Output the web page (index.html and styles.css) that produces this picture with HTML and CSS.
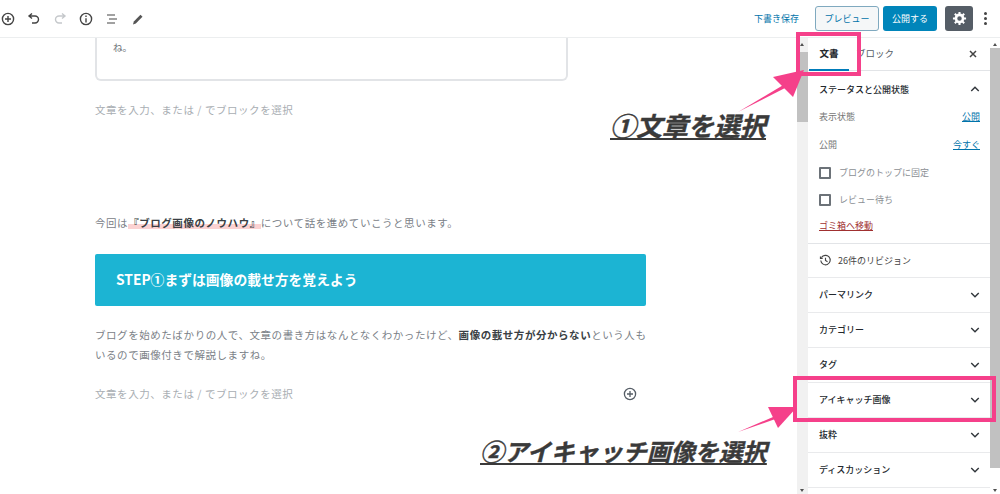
FILE: index.html
```html
<!DOCTYPE html>
<html lang="ja">
<head>
    <meta charset="UTF-8">
    <title>投稿を編集</title>
    <link rel="stylesheet" href="styles.css">
</head>
<body>
    <header class="topbar">
        <div class="tools">
            <svg class="tool" viewBox="0 0 16 16"><circle cx="8" cy="8" r="5.6"/><path d="M8 5v6M5 8h6"/></svg>
            <svg class="tool" viewBox="0 0 16 16"><path d="M6 2.5 3 5l3 2.5M3.5 5H9a3.5 3.5 0 0 1 0 7H6"/></svg>
            <svg class="tool off" viewBox="0 0 16 16"><path d="M10 2.5 13 5l-3 2.5M12.5 5H7a3.5 3.5 0 0 0 0 7h3"/></svg>
            <svg class="tool" viewBox="0 0 16 16"><circle cx="8" cy="8" r="5.6"/><path d="M8 7.2V11.500M8 4.600v1.400"/></svg>
            <svg class="tool thin" viewBox="0 0 16 16"><path d="M3 4h8M5 8h8M3 12h8"/></svg>
            <svg class="tool" viewBox="0 0 16 16"><path class="solid" d="M3 13.500l.8-3L10.500 3.800l2 2L5.800 12.500z"/></svg>
        </div>
        <div class="actions">
            <span class="save">下書き保存</span>
            <span class="btn-preview">プレビュー</span>
            <span class="btn-publish">公開する</span>
            <span class="btn-gear">
                <svg viewBox="0 0 16 16" width="15" height="15"><circle cx="8" cy="8" r="3.800" fill="none" stroke="#fff" stroke-width="2.800"/><path d="M8 1v3M8 12v3M1 8h3M12 8h3M3 3l2.200 2.200M10.800 10.800 13 13M13 3l-2.200 2.200M5.200 10.800 3 13" stroke="#fff" stroke-width="2.200"/></svg>
            </span>
            <span class="more"><i></i><i></i><i></i></span>
        </div>
    </header>

    <div class="workspace">
        <main class="editor">
            <div class="column">
                <div class="card"><p>ね。</p></div>
                <p class="placeholder first">文章を入力、または / でブロックを選択</p>
                <p class="para intro">今回は<mark><strong>『ブログ画像のノウハウ』</strong></mark>について話を進めていこうと思います。</p>
                <h2 class="step">STEP①まずは画像の載せ方を覚えよう</h2>
                <p class="para body">ブログを始めたばかりの人で、文章の書き方はなんとなくわかったけど、<strong>画像の載せ方が分からない</strong>という人もいるので画像付きで解説しますね。</p>
                <div class="add-row">
                    <p class="placeholder">文章を入力、または / でブロックを選択</p>
                    <svg class="add" viewBox="0 0 16 16"><circle cx="8" cy="8" r="5.600"/><path d="M8 5v6M5 8h6"/></svg>
                </div>
            </div>
        </main>

        <div class="track"><span class="thumb-left"></span></div>

        <aside class="sidebar">
            <div class="tabs">
                <span class="tab active">文書</span>
                <span class="tab">ブロック</span>
                <svg class="close" viewBox="0 0 8 8"><path d="M1 1l6 6M7 1 1 7"/></svg>
            </div>
            <section class="status">
                <div class="panel-head"><b>ステータスと公開状態</b><svg class="chev" viewBox="0 0 12 8"><path d="M1.500 6.500 6 2l4.500 4.500"/></svg></div>
                <div class="meta"><span>表示状態</span><a>公開</a></div>
                <div class="meta"><span>公開</span><a>今すぐ</a></div>
                <label class="check"><i></i>ブログのトップに固定</label>
                <label class="check"><i></i>レビュー待ち</label>
                <a class="trash">ゴミ箱へ移動</a>
            </section>
            <div class="revisions">
                <svg viewBox="0 0 16 16" width="13" height="13"><path d="M3 4.500A5.800 5.800 0 1 1 2.200 8M1.800 3v2.500h2.700M8 4.500V8l2.500 1.500"/></svg>
                <span>26件のリビジョン</span>
            </div>
            <div class="panel-row"><b>パーマリンク</b><svg class="chev" viewBox="0 0 12 8"><path d="M1.500 1.500 6 6l4.500-4.500"/></svg></div>
            <div class="panel-row"><b>カテゴリー</b><svg class="chev" viewBox="0 0 12 8"><path d="M1.500 1.500 6 6l4.500-4.500"/></svg></div>
            <div class="panel-row"><b>タグ</b><svg class="chev" viewBox="0 0 12 8"><path d="M1.500 1.500 6 6l4.500-4.500"/></svg></div>
            <div class="panel-row"><b>アイキャッチ画像</b><svg class="chev" viewBox="0 0 12 8"><path d="M1.500 1.500 6 6l4.500-4.500"/></svg></div>
            <div class="panel-row"><b>抜粋</b><svg class="chev" viewBox="0 0 12 8"><path d="M1.500 1.500 6 6l4.500-4.500"/></svg></div>
            <div class="panel-row"><b>ディスカッション</b><svg class="chev" viewBox="0 0 12 8"><path d="M1.500 1.500 6 6l4.500-4.500"/></svg></div>
        </aside>

        <div class="track right"><span class="thumb-right"></span></div>
    </div>

    <!-- annotations drawn over the screenshot -->
    <div class="box box-tab"></div>
    <div class="box box-eyecatch"></div>
    <svg class="arrows" width="1000" height="494" viewBox="0 0 1000 494">
        <path d="M738 112 785 84 787 87z" fill="#f5408a"/>
        <path d="M804 70 773 77 793 97z" fill="#f5408a"/>
        <path d="M738 432 780 414 781 417z" fill="#f5408a"/>
        <path d="M797 407 768 407 778 428z" fill="#f5408a"/>
    </svg>
    <span class="note note-one">①文章を選択</span>
    <span class="note note-two">②アイキャッチ画像を選択</span>
</body>
</html>
```

FILE: styles.css
```css
* {
    box-sizing: border-box;
}
html, body {
    margin: 0;
    height: 494px;
    overflow: hidden;
}
body {
    position: relative;
    background: #fff;
    color: #555d66;
    font-family: "Noto Sans CJK JP", "Noto Sans", sans-serif;
    font-size: 10px;
}
p, h2 {
    margin: 0;
}
.topbar {
    height: 38px;
    display: flex;
    justify-content: space-between;
    align-items: center;
    border-bottom: 1px solid #eceeef;
}
.tools {
    display: flex;
    gap: 10px;
}
.tool {
    width: 16px;
    height: 16px;
    fill: none;
    stroke: #444;
    stroke-width: 1.4;
}
.tool.off {
    stroke: #c5c8cb;
}
.tool.thin {
    stroke-width: 1.1;
}
.tool .solid {
    fill: #555;
    stroke: none;
}
.actions {
    display: flex;
    align-items: center;
    padding-right: 13px;
}
.save {
    color: #0073aa;
    font-size: 9px;
    margin-right: 16px;
}
.btn-preview {
    width: 64px;
    height: 25px;
    border: 1px solid #7fa9bf;
    border-radius: 3px;
    background: #f5f7f8;
    color: #0073aa;
    font-size: 9px;
    line-height: 23px;
    text-align: center;
    margin-right: 4px;
}
.btn-publish {
    width: 54px;
    height: 25px;
    border-radius: 3px;
    background: #0085ba;
    color: #fff;
    font-size: 9px;
    line-height: 25px;
    text-align: center;
    margin-right: 8px;
}
.btn-gear {
    width: 28px;
    height: 25px;
    border-radius: 3px;
    background: #555d66;
    display: flex;
    align-items: center;
    justify-content: center;
    margin-right: 11px;
}
.more {
    display: flex;
    flex-direction: column;
    gap: 2px;
}
.more i {
    width: 3px;
    height: 3px;
    border-radius: 50%;
    background: #444;
}
.workspace {
    display: flex;
    height: 456px;
}
.editor {
    width: 797px;
    overflow: hidden;
}
.column {
    width: 551px;
    margin-left: 95px;
}
.card {
    width: 473px;
    height: 43px;
    border: 2px solid #e2e4e7;
    border-top: none;
    border-radius: 0 0 6px 6px;
    padding: 0 0 0 16px;
    color: #6c7278;
    font-size: 9.500px;
    line-height: 18px;
}
.placeholder {
    color: #a9aeb3;
    font-size: 10.500px;
    letter-spacing: .55px;
    line-height: 18px;
}
.placeholder.first {
    margin-top: 20px;
}
.para {
    color: #7b8187;
    font-size: 10.500px;
    letter-spacing: .55px;
    line-height: 20px;
}
.para strong {
    color: #3a3f44;
}
.intro {
    margin-top: 94px;
}
.intro mark {
    color: #7b8187;
    background: linear-gradient(transparent 60%, #fbd2d2 60%, #fbd2d2 92%, transparent 92%);
}
.step {
    margin-top: 21px;
    height: 52px;
    padding-left: 21px;
    background: #1cb4d3;
    border-radius: 2px;
    color: #fff;
    font-size: 13.800px;
    font-weight: 700;
    line-height: 51px;
}
.body {
    margin-top: 19px;
    margin-right: -4px;
}
.add-row {
    display: flex;
    justify-content: space-between;
    align-items: center;
    margin-top: 20px;
    padding-right: 8px;
}
.add {
    width: 16px;
    height: 16px;
    fill: none;
    stroke: #555d66;
    stroke-width: 1.300;
}
.track {
    width: 11px;
    background: #f1f1f1;
    position: relative;
}
.track::before, .track::after {
    content: '';
    position: absolute;
    left: 3px;
    border-left: 2.500px solid transparent;
    border-right: 2.500px solid transparent;
}
.track::before {
    top: 5px;
    border-bottom: 3px solid #505050;
}
.track::after {
    bottom: 2px;
    border-top: 3px solid #505050;
}
.track.right {
    width: 10px;
    background: #fff;
}
.thumb-left {
    display: block;
    width: 11px;
    height: 70px;
    margin-top: 14px;
    background: #c1c1c1;
}
.thumb-right {
    display: block;
    width: 10px;
    height: 420px;
    margin-top: 10px;
    background: #c1c1c1;
}
.sidebar {
    width: 182px;
    background: #fff;
}
.tabs {
    display: flex;
    align-items: center;
    height: 33px;
    border-bottom: 1px solid #e2e4e7;
}
.tab {
    width: 40px;
    height: 33px;
    margin-left: 1px;
    text-align: center;
    line-height: 31px;
    color: #555d66;
    font-size: 9.500px;
}
.tab + .tab {
    width: 50px;
}
.tab.active {
    color: #23282d;
    font-weight: 700;
    border-bottom: 2px solid #007cba;
}
.close {
    width: 8px;
    height: 8px;
    margin-left: auto;
    margin-right: 13px;
    fill: none;
    stroke: #444;
    stroke-width: 1.500;
}
.status {
    padding: 0 10px 0 11px;
    height: 173px;
    border-bottom: 1px solid #e2e4e7;
    font-size: 9px;
}
.panel-head {
    display: flex;
    justify-content: space-between;
    align-items: center;
    height: 36px;
    color: #23282d;
}
.panel-head b, .panel-row b {
    font-weight: 500;
    font-size: 9px;
}
.chev {
    width: 10px;
    height: 8px;
    fill: none;
    stroke: #32373c;
    stroke-width: 1.700;
}
.meta {
    display: flex;
    justify-content: space-between;
    height: 28px;
    line-height: 16px;
    padding-top: 2px;
    color: #777;
}
.meta + .meta {
    height: 24px;
}
.meta a {
    color: #0073aa;
    text-decoration: underline;
}
.check {
    display: flex;
    align-items: center;
    gap: 8px;
    height: 27px;
    color: #8b8f94;
}
.check i {
    width: 12px;
    height: 12px;
    border: 2px solid #6c7278;
    border-radius: 1px;
}
.trash {
    display: block;
    margin-top: 6px;
    line-height: 14px;
    color: #a03030;
    text-decoration: underline;
}
.revisions {
    display: flex;
    align-items: center;
    gap: 6px;
    padding-left: 11px;
    height: 34px;
    border-bottom: 1px solid #e9eaec;
    font-size: 9px;
    color: #444;
}
.revisions svg {
    fill: none;
    stroke: #444;
    stroke-width: 1.400;
}
.panel-row {
    display: flex;
    justify-content: space-between;
    align-items: center;
    height: 35px;
    padding: 0 10px 1px 11px;
    border-bottom: 1px solid #e9eaec;
    color: #23282d;
}
.box {
    position: absolute;
    border: 4px solid #f5408a;
}
.box-tab {
    left: 796px;
    top: 32px;
    width: 65px;
    height: 44px;
}
.box-eyecatch {
    left: 793px;
    top: 376px;
    width: 203px;
    height: 46px;
}
.arrows {
    position: absolute;
    left: 0;
    top: 0;
    pointer-events: none;
}
.note {
    position: absolute;
    color: #3a3a3a;
    font-size: 24px;
    font-weight: 700;
    font-style: italic;
    line-height: 30px;
    text-decoration: underline;
    white-space: nowrap;
    -webkit-text-stroke: .4px #3a3a3a;
}
.note-one {
    left: 610px;
    top: 110px;
    font-size: 26px;
}
.note-two {
    left: 480px;
    top: 436px;
}
```
